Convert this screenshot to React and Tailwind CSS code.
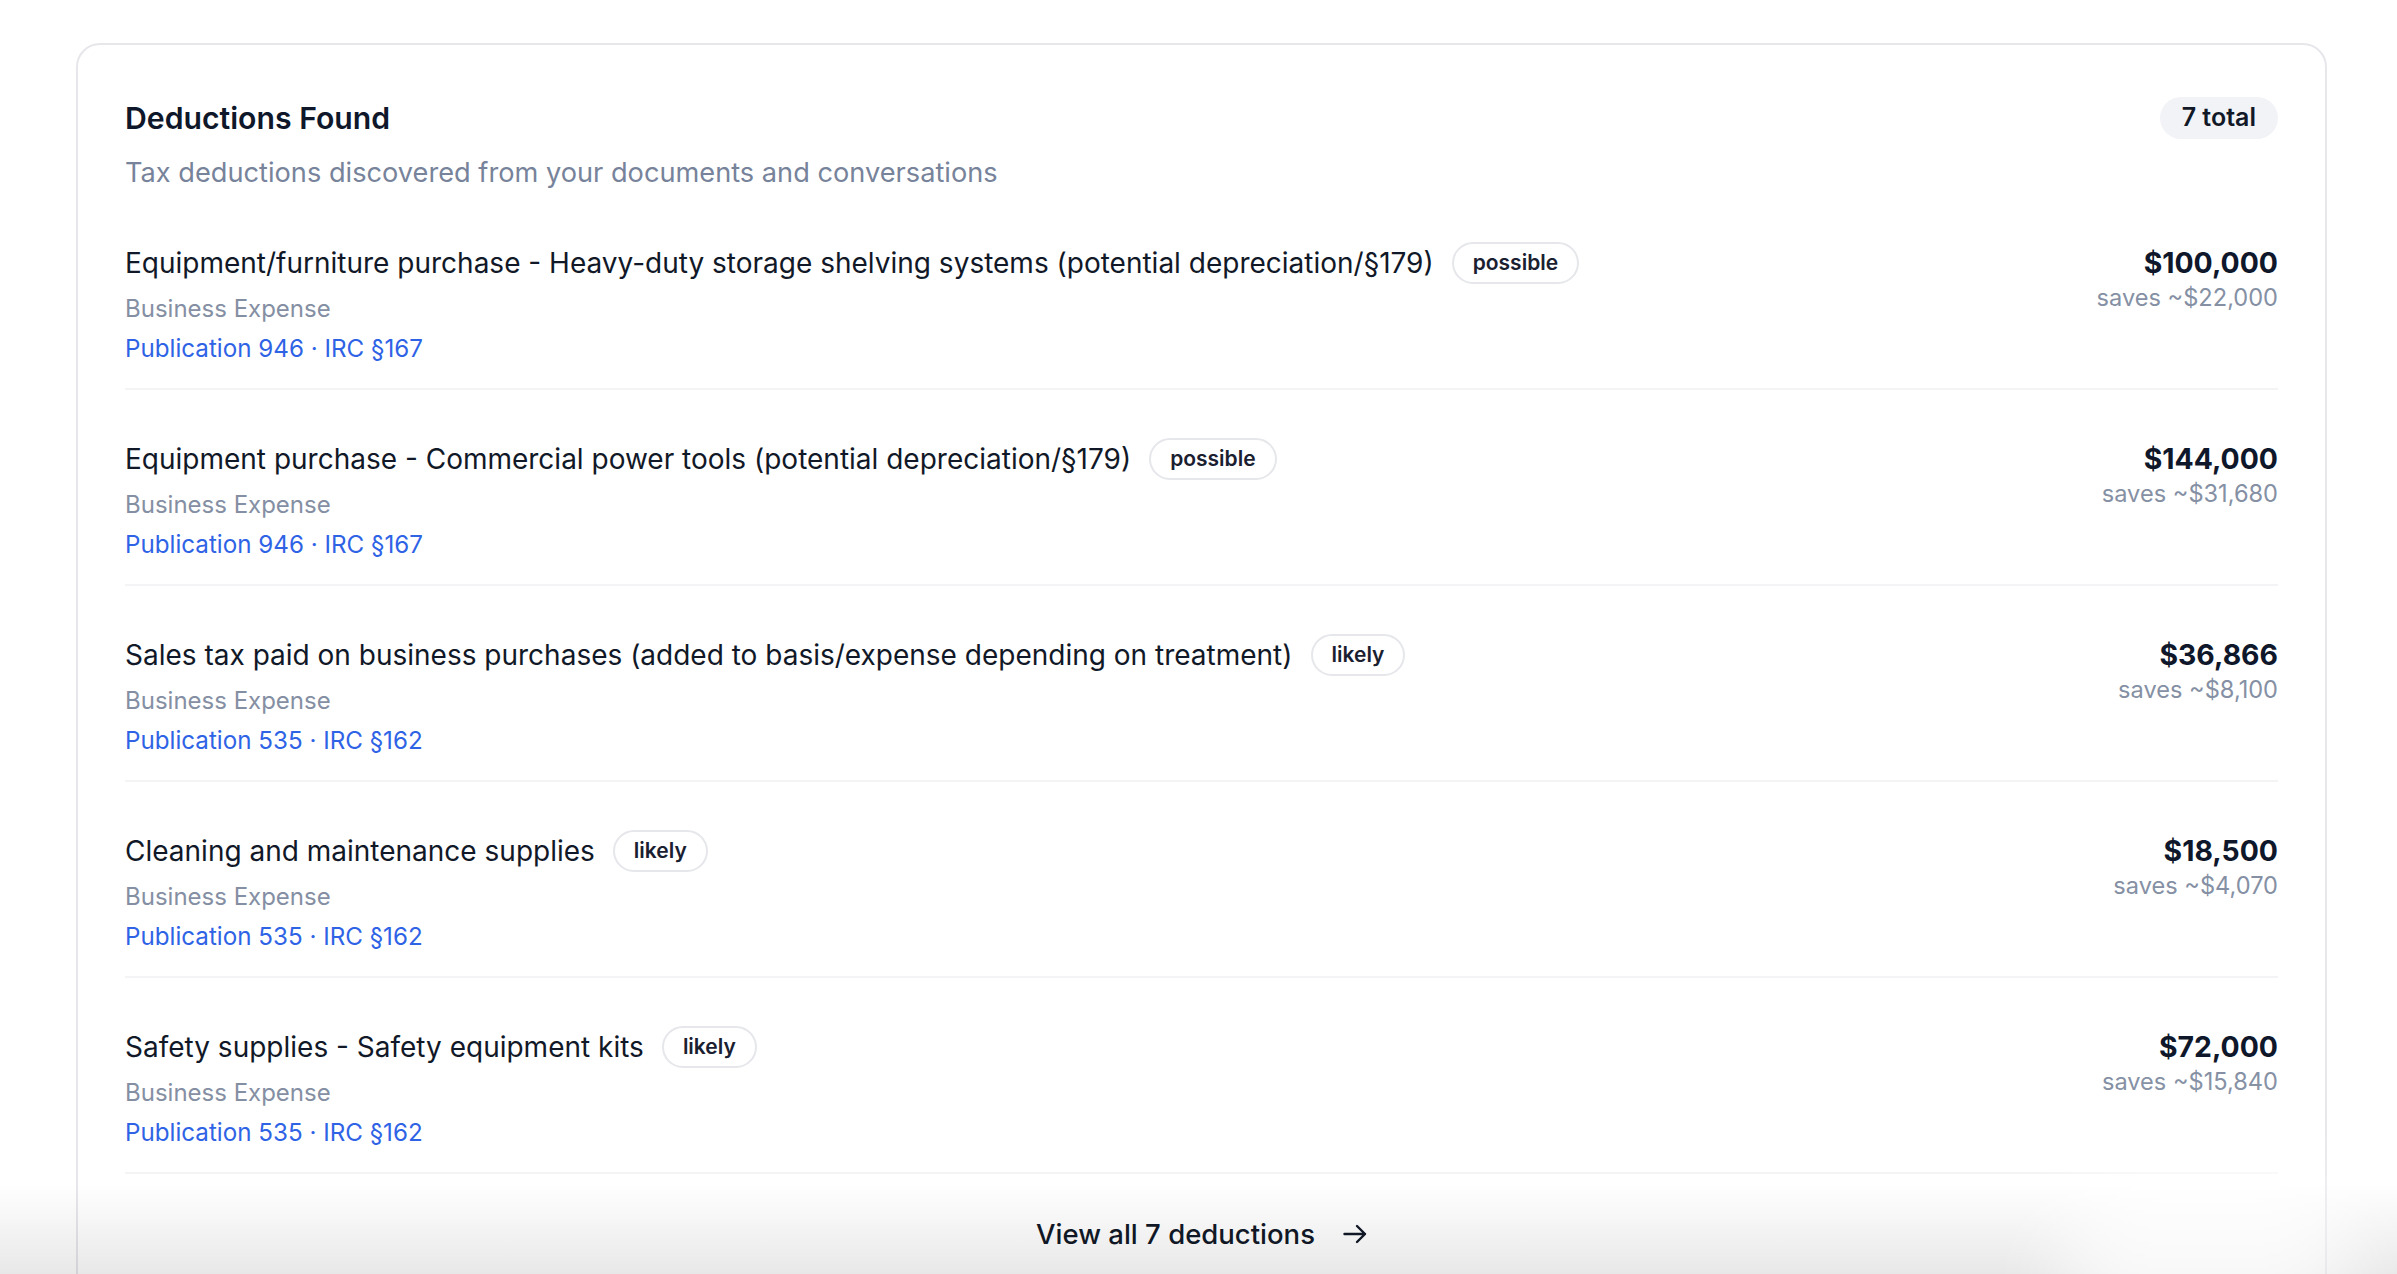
import React from "react";

const deductions = [
  {
    title:
      "Equipment/furniture purchase - Heavy-duty storage shelving systems (potential depreciation/§179)",
    confidence: "possible",
    category: "Business Expense",
    source: "Publication 946 · IRC §167",
    amount: "$100,000",
    saves: "saves ~$22,000",
  },
  {
    title: "Equipment purchase - Commercial power tools (potential depreciation/§179)",
    confidence: "possible",
    category: "Business Expense",
    source: "Publication 946 · IRC §167",
    amount: "$144,000",
    saves: "saves ~$31,680",
  },
  {
    title:
      "Sales tax paid on business purchases (added to basis/expense depending on treatment)",
    confidence: "likely",
    category: "Business Expense",
    source: "Publication 535 · IRC §162",
    amount: "$36,866",
    saves: "saves ~$8,100",
  },
  {
    title: "Cleaning and maintenance supplies",
    confidence: "likely",
    category: "Business Expense",
    source: "Publication 535 · IRC §162",
    amount: "$18,500",
    saves: "saves ~$4,070",
  },
  {
    title: "Safety supplies - Safety equipment kits",
    confidence: "likely",
    category: "Business Expense",
    source: "Publication 535 · IRC §162",
    amount: "$72,000",
    saves: "saves ~$15,840",
  },
];

function ArrowRight() {
  return (
    <svg width="24" height="20" viewBox="0 0 24 20" fill="none" className="shrink-0">
      <path
        d="M1.5 10H22M14 2l8 8-8 8"
        stroke="#111827"
        strokeWidth="2.4"
        strokeLinecap="round"
        strokeLinejoin="round"
      />
    </svg>
  );
}

function DeductionRow({ item }) {
  return (
    <div className="flex items-start justify-between border-b-2 border-[#f4f4f6] pt-12 pb-[21px]">
      <div className="flex flex-col">
        <div className="flex items-center gap-[18px] h-[42px]">
          <span className="text-[28px] leading-[42px] text-[#111827]">{item.title}</span>
          <span className="h-[42px] flex items-center rounded-full border-2 border-[#e6e7eb] px-[19px] text-[21px] font-semibold text-[#1a2030]">
            {item.confidence}
          </span>
        </div>
        <div className="mt-[7px] text-[24px] leading-[36px] text-[#858fa3]">{item.category}</div>
        <div className="mt-[4px] text-[24.2px] leading-[36px] text-[#2f63e6]">{item.source}</div>
      </div>
      <div className="flex flex-col items-end">
        <div className="text-[28.4px] leading-[42px] font-bold text-[#0f172a]">{item.amount}</div>
        <div className="-mt-[3px] text-[23.6px] leading-[34px] text-[#8590a4]">{item.saves}</div>
      </div>
    </div>
  );
}

export default function App() {
  return (
    <div className="relative h-[1274px] w-[2397px] overflow-hidden bg-white font-['Inter','Noto_Sans',sans-serif]">
      <div className="pt-[43px] pl-[76px]">
        <section className="w-[2251px] rounded-3xl border-2 border-[#e6e6eb] bg-white px-[47px] pt-[52px] pb-24">
          <header className="flex items-start justify-between pb-[3px]">
            <div className="flex flex-col">
              <h2 className="text-[30.2px] leading-[42px] font-semibold text-[#0f172a]">Deductions Found</h2>
              <p className="mt-[16px] text-[27.2px] leading-[36px] text-[#77839a]">
                Tax deductions discovered from your documents and conversations
              </p>
            </div>
            <span className="flex h-[42px] items-center rounded-full bg-[#f2f3f7] px-[22px] text-[25px] font-semibold text-[#111827]">
              7 total
            </span>
          </header>

          <div className="flex flex-col">
            {deductions.map((d) => (
              <DeductionRow key={d.title} item={d} />
            ))}
          </div>

          <div className="flex items-center justify-center gap-[28px] pt-[40px]">
            <span className="text-[27.5px] leading-[40px] font-medium text-[#111827]">View all 7 deductions</span>
            <ArrowRight />
          </div>
        </section>
      </div>

      {/* soft fade along the bottom edge of the viewport */}
      <div className="pointer-events-none absolute inset-x-0 bottom-0 h-[90px] bg-linear-to-b from-black/0 to-black/[0.09]" />
      <div className="pointer-events-none absolute bottom-[-80px] right-[40px] h-[200px] w-[300px] rounded-full bg-white/70 blur-2xl" />
    </div>
  );
}
